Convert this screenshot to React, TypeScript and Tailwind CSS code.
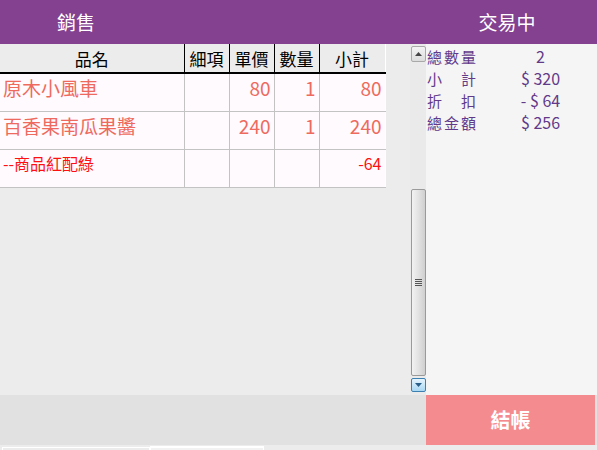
const rows = [
  { name: "原木小風車", detail: "", price: "80", qty: "1", sub: "80", kind: "item" },
  { name: "百香果南瓜果醬", detail: "", price: "240", qty: "1", sub: "240", kind: "item" },
  { name: "--商品紅配綠", detail: "", price: "", qty: "", sub: "-64", kind: "promo" },
];

const summary = [
  { label: ["總", "數", "量"], value: "2" },
  { label: ["小", "計"], value: "$ 320" },
  { label: ["折", "扣"], value: "- $ 64" },
  { label: ["總", "金", "額"], value: "$ 256" },
];

const font = "font-['Microsoft_JhengHei','Noto_Sans_CJK_TC',sans-serif]";

function ScrollBar() {
  return (
    <div className="w-[16px] h-full bg-[#eaeaea] flex flex-col items-center pt-[2px] pb-[3px]">
      <div className="w-[15px] h-[16px] border border-[#a9a9a9] rounded-[2px] bg-gradient-to-b from-[#f4f4f4] to-[#dcdcdc] flex items-center justify-center">
        <svg width="7" height="4" viewBox="0 0 7 4">
          <path d="M0 4 L3.5 0 L7 4 Z" fill="#444" />
        </svg>
      </div>
      <div className="flex-1 w-full" />
      <div className="w-[15px] h-[187px] border border-[#9a9a9a] rounded-[2px] bg-gradient-to-r from-[#f2f2f2] via-[#e2e2e2] to-[#cfcfcf] flex items-center justify-center">
        <div className="flex flex-col gap-[1px]">
          <div className="w-[7px] h-[1px] bg-[#555]" />
          <div className="w-[7px] h-[1px] bg-[#555]" />
          <div className="w-[7px] h-[1px] bg-[#555]" />
          <div className="w-[7px] h-[1px] bg-[#555]" />
        </div>
      </div>
      <div className="w-[15px] h-[14px] mt-[2px] border border-[#3c7fb1] rounded-[2px] bg-gradient-to-b from-[#e6f4fc] to-[#a9d8f4] flex items-center justify-center">
        <svg width="7" height="4" viewBox="0 0 7 4">
          <path d="M0 0 L7 0 L3.5 4 Z" fill="#2a5f8a" />
        </svg>
      </div>
    </div>
  );
}

export default function App() {
  return (
    <div className={`w-[597px] h-[450px] bg-[#ececec] flex flex-col overflow-hidden ${font}`}>
      <div className="h-[44px] bg-[#83418f] flex items-center text-white text-[19px]">
        <div className="w-[152px] text-center">銷售</div>
        <div className="flex-1" />
        <div className="w-[160px] mr-[10px] text-center">交易中</div>
      </div>

      <div className="h-[351px] flex">
        <div className="w-[410px] h-full">
          <table className="w-[385px] table-fixed border-collapse border-r border-white">
            <colgroup>
              <col className="w-[184px]" />
              <col className="w-[45px]" />
              <col className="w-[45px]" />
              <col className="w-[45px]" />
              <col className="w-[66px]" />
            </colgroup>
            <thead>
              <tr className="h-[29px] bg-[#ececec] text-[17px] text-black">
                <th className="font-normal border-r border-b-2 border-black leading-none">品名</th>
                <th className="font-normal border-r border-b-2 border-black leading-none">細項</th>
                <th className="font-normal border-r border-b-2 border-black leading-none">單價</th>
                <th className="font-normal border-r border-b-2 border-black leading-none">數量</th>
                <th className="font-normal border-b-2 border-black leading-none">小計</th>
              </tr>
            </thead>
            <tbody>
              {rows.map((r) => {
                const color = r.kind === "promo" ? "text-[#ff1010] text-[16px]" : "text-[#ee6a5e] text-[19px]";
                return (
                  <tr key={r.name} className={`h-[38px] bg-[#fefafe] ${color}`}>
                    <td className="border border-l-0 border-t-0 border-[#c3c3c3] pl-[3px] pb-[10px] leading-none">{r.name}</td>
                    <td className="border border-t-0 border-[#c3c3c3]">{r.detail}</td>
                    <td className="border border-t-0 border-[#c3c3c3] text-right pr-[3px] pb-[10px] leading-none">{r.price}</td>
                    <td className="border border-t-0 border-[#c3c3c3] text-right pr-[3px] pb-[10px] leading-none">{r.qty}</td>
                    <td className="border border-t-0 border-r-0 border-[#c3c3c3] text-right pr-[3px] pb-[10px] leading-none">{r.sub}</td>
                  </tr>
                );
              })}
            </tbody>
          </table>
        </div>
        <ScrollBar />
        <div className="flex-1 bg-[#f5f5f5] pl-[1px] pt-[1px] text-[#623a8a] text-[15px]">
          {summary.map((s) => (
            <div key={s.value} className="h-[22px] flex items-center">
              <div className="w-[49px] flex justify-between leading-[19px]">
                {s.label.map((c) => (
                  <span key={c}>{c}</span>
                ))}
              </div>
              <div className="flex-1 text-center text-[16px] leading-[19px] pl-[8px]">{s.value}</div>
            </div>
          ))}
        </div>
      </div>

      <div className="h-[50px] flex">
        <div className="flex-1 bg-[#e1e1e1]" />
        <div className="w-[169px] bg-[#f48b8f] flex items-center justify-center text-white text-[20px] font-bold">
          結帳
        </div>
        <div className="w-[2px] bg-[#e1e1e1]" />
      </div>

      <div className="flex-1 flex items-end gap-0 pl-[2px]">
        <div className="w-[148px] h-[3px] border-t border-l border-r border-white" />
        <div className="w-[114px] h-[4px] border-t-2 border-l border-r border-white bg-[#f2f2f2]" />
      </div>
    </div>
  );
}
